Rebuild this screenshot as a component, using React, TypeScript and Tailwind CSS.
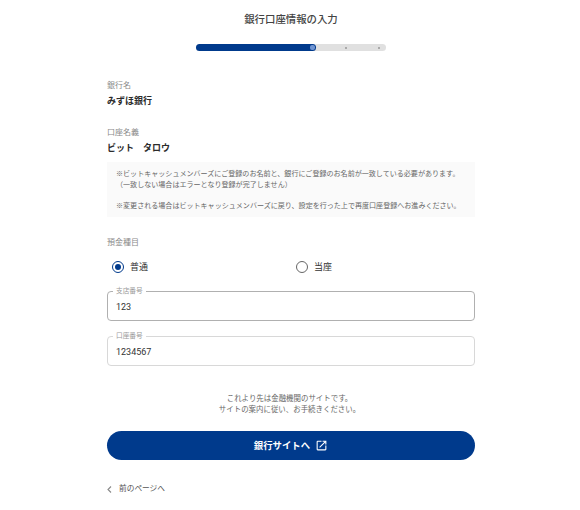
const font = { fontFamily: '"Roboto", "Noto Sans CJK JP", sans-serif' };

function Info({ label, value, className }: { label: string; value: string; className: string }) {
  return (
    <div className={className}>
      <p className="text-[8px] leading-[12px] text-[#8a8a8a]">{label}</p>
      <p className="mt-[2px] text-[9px] leading-[14px] font-bold text-[#2b2b2b]">{value}</p>
    </div>
  );
}

function Radio({ label, checked }: { label: string; checked?: boolean }) {
  return (
    <div className="flex items-center gap-[6px] w-[184px] pl-[5px]">
      <span className={`flex items-center justify-center w-[12px] h-[12px] rounded-full border ${checked ? "border-[#003a8c]" : "border-[#666666]"}`}>
        {checked && <span className="w-[6px] h-[6px] rounded-full bg-[#003a8c]" />}
      </span>
      <span className="text-[9px] leading-[12px] text-[#333333]">{label}</span>
    </div>
  );
}

function Field({ label, value, border, className }: { label: string; value: string; border: string; className?: string }) {
  return (
    <fieldset className={`h-[33px] border rounded-[4px] pl-[8px] ${border} ${className ?? ""}`}>
      <legend className="ml-[-3px] px-[3px] text-[6.7px] leading-[6px] text-[#999999]">{label}</legend>
      <p className="mt-[6px] text-[9px] leading-[14px] text-[#333333]">{value}</p>
    </fieldset>
  );
}

export default function App() {
  return (
    <div style={font} className="w-[580px] h-[510px] bg-white overflow-hidden">
      <div className="w-[368px] ml-[107px]">
        <h1 className="pt-[13px] text-center text-[10.4px] leading-[14px] font-medium text-[#444444]">銀行口座情報の入力</h1>

        {/* progress */}
        <div className="relative flex items-center w-[190px] h-[7px] mt-[17px] ml-[89px] rounded-full bg-[#e0e0e0]">
          <div className="flex items-center justify-end w-[120px] h-[7px] rounded-full bg-[#003a8c] pr-[1px]">
            <span className="w-[5px] h-[5px] rounded-[2px] bg-[#6f94d2]" />
          </div>
          <span className="absolute left-[149px] w-[2px] h-[2px] rounded-full bg-[#999999]" />
          <span className="absolute left-[182px] w-[2px] h-[2px] rounded-full bg-[#999999]" />
        </div>

        <Info label="銀行名" value="みずほ銀行" className="mt-[29px]" />
        <Info label="口座名義" value="ビット　タロウ" className="mt-[19px]" />

        <div className="mt-[7px] h-[55px] bg-[#fafafa] pl-[9px] pt-[6px] text-[7.05px] leading-[11px] text-[#666666] whitespace-nowrap">
          <p>※ビットキャッシュメンバーズにご登録のお名前と、銀行にご登録のお名前が一致している必要があります。</p>
          <p>（一致しない場合はエラーとなり登録が完了しません）</p>
          <p className="mt-[10px]">※変更される場合はビットキャッシュメンバーズに戻り、設定を行った上で再度口座登録へお進みください。</p>
        </div>

        <p className="mt-[20px] text-[8px] leading-[12px] text-[#8a8a8a]">預金種目</p>
        <div className="flex mt-[12px]">
          <Radio label="普通" checked />
          <Radio label="当座" />
        </div>

        <Field label="支店番号" value="123" border="border-[#b0b0b0]" className="mt-[15px]" />
        <Field label="口座番号" value="1234567" border="border-[#d8d8d8]" className="mt-[12px]" />

        <div className="mt-[27px] pr-[3px] text-center text-[7.45px] leading-[11px] text-[#666666]">
          <p>これより先は金融機関のサイトです。</p>
          <p>サイトの案内に従い、お手続きください。</p>
        </div>

        <button className="flex items-center justify-center gap-[5px] w-full h-[29px] mt-[16px] rounded-full bg-[#003a8c] text-white">
          <span className="text-[9.4px] font-bold leading-[14px]">銀行サイトへ</span>
          <svg className="w-[13px] h-[13px]" viewBox="0 0 24 24" fill="currentColor">
            <path d="M19 19H5V5h7V3H5a2 2 0 0 0-2 2v14a2 2 0 0 0 2 2h14c1.1 0 2-.9 2-2v-7h-2v7zM14 3v2h3.59l-9.83 9.83 1.41 1.41L19 6.41V10h2V3h-7z" />
          </svg>
        </button>

        <div className="flex items-center gap-[7px] mt-[23px] text-[#555555]">
          <svg className="w-[5px] h-[7px]" viewBox="0 0 5 7" fill="none" stroke="#888888" strokeWidth="1.1">
            <path d="M4 .5 1 3.5 4 6.5" />
          </svg>
          <span className="text-[7.7px] leading-[12px]">前のページへ</span>
        </div>
      </div>
    </div>
  );
}
